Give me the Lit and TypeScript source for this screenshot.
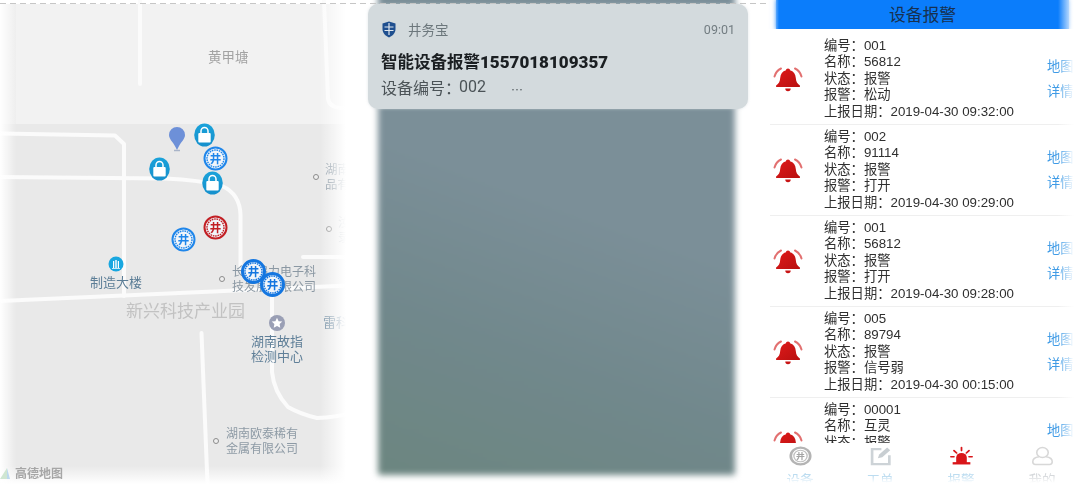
import { LitElement, html, css, svg, unsafeCSS } from "lit";
import { customElement } from "lit/decorators.js";

const FONT = unsafeCSS(`"Liberation Sans", "Noto Sans CJK SC", sans-serif`);

const items = [
  { no: "001", name: "56812", alarm: "松动", date: "2019-04-30 09:32:00" },
  { no: "002", name: "91114", alarm: "打开", date: "2019-04-30 09:29:00" },
  { no: "001", name: "56812", alarm: "打开", date: "2019-04-30 09:28:00" },
  { no: "005", name: "89794", alarm: "信号弱", date: "2019-04-30 00:15:00" },
  { no: "00001", name: "互灵", alarm: "打开", date: "2019-04-30 00:10:00" },
];

const labels = [
  { x: 208, y: 50, s: 13.5, c: "#a3a3a3", t: "黄甲塘" },
  { x: 325, y: 163, s: 12.5, c: "#8d9aa5", t: "湖南<br>品有" },
  { x: 338, y: 216, s: 12.5, c: "#b5bcc2", t: "汝<br>录" },
  { x: 90, y: 274.5, s: 13, c: "#5b7d96", t: "制造大楼" },
  { x: 126, y: 304, s: 17, c: "#c2c2c2", t: "新兴科技产业园" },
  { x: 232, y: 264.5, s: 12, c: "#8b98a3", t: "长沙鸿力电子科<br>技发展有限公司" },
  { x: 251, y: 333.5, s: 13, c: "#5f7f98", t: "湖南故指<br>检测中心" },
  { x: 323, y: 314.5, s: 13, c: "#6f8ba0", t: "雷科" },
  { x: 226, y: 426.5, s: 12, c: "#8d9aa5", t: "湖南欧泰稀有<br>金属有限公司" },
];

const dots = [[316, 177], [329, 229], [222, 279], [216, 441]];
const locks = [[204, 135], [159, 169], [212, 183]];
const wells = [
  { x: 215, y: 158, c: "#1f86ea", heavy: false },
  { x: 215, y: 227, c: "#c21f24", heavy: false },
  { x: 183, y: 239, c: "#1f86ea", heavy: false },
  { x: 253, y: 271, c: "#1476e0", heavy: true },
  { x: 272, y: 284, c: "#1476e0", heavy: true },
];

const bell = html`<svg class="bell" viewBox="0 0 30 26" width="30" height="26">
  <defs><linearGradient id="bg" x1="0" y1="0" x2="1" y2="1"><stop offset="0" stop-color="#e01a1a"/><stop offset="1" stop-color="#b81010"/></linearGradient></defs>
  <path d="M15 2.500c1.200 0 2 .8 2 1.800 3.600 1 5.500 3.800 5.800 7.600.3 3.600 1.400 5.600 4.100 7.600v1.500H3.100v-1.500c2.700-2 3.800-4 4.100-7.600.3-3.800 2.200-6.600 5.800-7.600 0-1 .8-1.800 2-1.800z" fill="url(#bg)"/>
  <path d="M12.300 22.500h5.400a2.700 2.700 0 0 1-5.400 0z" fill="#c81414"/>
  <path d="M8 2.500C4.500 4.200 2.400 7 1.500 10.500M22 2.500c3.500 1.700 5.600 4.500 6.500 8" fill="none" stroke="#e27070" stroke-width="2" stroke-linecap="round"/>
</svg>`;

@customElement("app-root")
export class AppRoot extends LitElement {
  static styles = css`
    :host { display: block; width: 1084px; height: 484px; position: relative; overflow: hidden; background: #fff; font-family: ${FONT}; }
    .dash { position: absolute; left: 0; right: 0; top: 3px; height: 1px; z-index: 2; background: repeating-linear-gradient(90deg, #c6c6c6 0 6px, rgba(255,255,255,0) 6px 10px); }
    .row { display: flex; height: 484px; }

    .map { position: relative; width: 360px; height: 484px; flex: none; overflow: hidden; }
    .map-inner { position: absolute; inset: 4px 0 0 0; background: #e9e9e9; filter: blur(.45px); }
    .map-svg { position: absolute; left: 0; top: -4px; }
    .lbl { position: absolute; line-height: 15px; white-space: nowrap; filter: blur(.3px); }
    .dot { position: absolute; width: 6px; height: 6px; margin: -3px; border-radius: 50%; border: 1.500px solid #8c8c8c; box-sizing: border-box; background: #efefef; }
    .pin { position: absolute; filter: blur(.3px); }
    .map-fade { position: absolute; inset: 0; pointer-events: none;
      background:
        linear-gradient(90deg, #fff 0, rgba(255,255,255,0) 16px),
        linear-gradient(270deg, #fff 14px, rgba(255,255,255,0) 40px),
        linear-gradient(0deg, #fff 0, rgba(255,255,255,0) 18px);
    }
    .amap { position: absolute; left: 15px; top: 467px; font-size: 12px; line-height: 15px; color: #a6a6a6; font-weight: 700; filter: blur(.4px); }
    .amap-logo { position: absolute; left: 0; top: 467px; filter: blur(.5px); }

    .phone { flex: none; width: 410px; position: relative; height: 484px; }
    .wall { position: absolute; left: 18px; top: -8px; width: 357px; height: 483px; border-radius: 2px; filter: blur(3px);
      background: linear-gradient(200deg, #7b8f99 0%, #7b8f98 45%, #71888c 72%, #6c8680 100%); }
    .notice { position: absolute; left: 8px; top: 4px; width: 380px; height: 105px; box-sizing: border-box; border-radius: 10px; background: #d3dadd;
      box-shadow: 0 0 3px rgba(211,218,221,.7); padding: 12px 13px 0; filter: blur(.35px); color: #1b1f22; font-family: "Noto Sans CJK SC", sans-serif; }
    .n-head { display: flex; align-items: center; height: 26px; font-size: 13.500px; color: #6c777c; }
    .n-head svg { margin-left: 1px; }
    .n-app { margin-left: 12px; flex: 1; }
    .n-time { font-family: Roboto, sans-serif; font-size: 12.500px; color: #737d82; }
    .n-title { font-size: 16.500px; font-weight: 700; line-height: 24px; margin-top: 7px; white-space: nowrap; }
    .n-title b { font-family: Roboto, sans-serif; font-size: 17px; }
    .n-sub { display: flex; font-size: 16px; line-height: 26px; color: #4b5357; white-space: nowrap; }
    .n-sub i { font-style: normal; font-size: 12px; margin-left: 25px; padding-top: 3px; }
    .n-sub b { font-family: Roboto, sans-serif; font-weight: 400; font-size: 16px; margin-left: -2px; }

    .app { flex: none; width: 314px; height: 484px; display: flex; flex-direction: column; position: relative; z-index: 3; background: #fff; }
    .hd-wrap { height: 29px; flex: none; padding: 0 15px 0 6px; background: #fff; }
    .hd { height: 27px; padding-bottom: 2px; background: #0b7dfb; display: flex; align-items: center; justify-content: center; font-size: 16.800px; color: #17304f; box-shadow: 0 0 5px 1px #0b7dfb; clip-path: inset(0 -8px 0 -8px); font-family: "Noto Sans CJK SC", sans-serif; }
    .list { flex: 1; min-height: 0; overflow: hidden; padding-top: 5px; }
    .item { height: 91px; box-sizing: border-box; border-bottom: 1px solid #efefef; display: flex; align-items: center; color: #2f2f2f; font-size: 13.300px; }
    .bcell { width: 54px; flex: none; padding-left: 3px; box-sizing: border-box; display: flex; }
    .info { flex: 1; line-height: 16.500px; white-space: nowrap; filter: blur(.35px); }
    .links { width: 37px; flex: none; display: flex; flex-direction: column; gap: 7px; color: #3f9be6; line-height: 18px; white-space: nowrap; overflow: hidden; filter: blur(.3px); }
    .edge { position: absolute; right: 0; top: 0; bottom: 0; width: 26px; background: linear-gradient(90deg, rgba(255,255,255,0), #fff 16px); pointer-events: none; }
    .hd-edge { position: absolute; left: 0; top: 0; width: 9px; height: 29px; background: linear-gradient(90deg, #fff, rgba(255,255,255,0)); }
    .tabs { height: 41px; flex: none; background: #fff; position: relative; }
    .tab { position: absolute; top: 0; width: 60px; margin-left: -30px; display: flex; flex-direction: column; align-items: center; font-size: 13.500px; line-height: 17px; color: #bcdcf0; filter: blur(.5px); }
    .tab svg { display: block; margin-top: 3px; margin-bottom: 6px; }
    .tab.gray { color: #d6d9dc; }
    .t-fade { position: absolute; left: 0; right: 0; bottom: 0; height: 8px; background: linear-gradient(180deg, rgba(255,255,255,0), #fff 85%); pointer-events: none; }
  `;

  well(c: string, heavy: boolean) {
    return html`<svg width="25" height="25" viewBox="0 0 25 25">
      <circle cx="12.500" cy="12.500" r="11" fill="#f1f5fa" stroke="${c}" stroke-width="${heavy ? 3 : 2}"/>
      <circle cx="12.500" cy="12.500" r="8.500" fill="none" stroke="${c}" stroke-width="1.400" stroke-dasharray="1.600 .8"/>
      <text x="12.500" y="16.700" text-anchor="middle" font-size="11.500" font-weight="700" fill="${c}" font-family="Noto Sans CJK SC">井</text>
    </svg>`;
  }

  lock() {
    return html`<svg width="21" height="24" viewBox="0 0 21 24">
      <defs><linearGradient id="lk" x1="0" y1="0" x2="0" y2="1"><stop offset="0" stop-color="#1aa2da"/><stop offset="1" stop-color="#1690cc"/></linearGradient></defs>
      <ellipse cx="10.500" cy="12" rx="10.300" ry="11.500" fill="url(#lk)"/>
      <path d="M7 10.500V8a3.500 3.500 0 0 1 7 0v2.500" fill="none" stroke="#fff" stroke-width="1.500"/>
      <rect x="4.300" y="10" width="12.400" height="9.500" rx="1" fill="#fff"/>
    </svg>`;
  }

  mapRoads() {
    return svg`
      <rect x="0" y="4" width="360" height="120" fill="#f2f2f2"/>
      <rect x="0" y="4" width="16" height="120" fill="#eeeeee"/>
      <g fill="none" stroke="#fbfbfb" stroke-width="4" stroke-linecap="round" stroke-linejoin="round">
        <path d="M140 0V84"/>
        <path d="M324 0L328 98Q329 107 340 108H360"/>
        <path d="M0 133.500L115 135.500L124 144V296"/>
        <path d="M0 177L165 178.500Q200 180 222 186Q240 194 240.500 215V268"/>
        <path d="M0 301L360 285"/>
        <path d="M272 293V372Q274 392 288 407Q300 414 317 418Q335 418 360 411"/>
        <path d="M201.500 333L207.500 484"/>
        <path d="M303 257H360"/>
      </g>`;
  }

  render() {
    const tabs = [
      { x: 30, t: "设备", cls: "", icon: svg`<circle cx="13" cy="13" r="11" fill="none" stroke="#b4b4b4" stroke-width="3"/><circle cx="13" cy="13" r="7.500" fill="none" stroke="#c0c0c0" stroke-width="1.500"/><text x="13" y="17" text-anchor="middle" font-size="10" font-weight="700" fill="#a5a5a5" font-family="Noto Sans CJK SC">井</text>` },
      { x: 110, t: "工单", cls: "", icon: svg`<path d="M14 4H3.500V23.500H23V12" fill="none" stroke="#cdd3d7" stroke-width="3"/><path d="M10 16l1.500-5 9-9 3.500 3.500-9 9z" fill="#c8ced2"/>` },
      { x: 191, t: "报警", cls: "", icon: svg`<path d="M7 22V15a6 6 0 0 1 12 0v7z" fill="#d9161a"/><rect x="3" y="21" width="20" height="3" fill="#d9161a"/><path d="M13 2v4M4.500 6l3 3M21.500 6l-3 3M1 14h3.500M21.500 14H25" stroke="#d9161a" stroke-width="2" stroke-linecap="round"/>` },
      { x: 272, t: "我的", cls: "gray", icon: svg`<circle cx="13" cy="8.500" r="6.500" fill="none" stroke="#d8d8d8" stroke-width="1.800"/><path d="M9 14Q2 15 2 20.500Q2 24 5 24H21Q24 24 24 20.500Q24 15 17 14" fill="none" stroke="#d8d8d8" stroke-width="1.800"/>` },
    ];
    return html`
      <div class="dash"></div>
      <div class="row">
        <section class="map">
          <div class="map-inner">
            <svg class="map-svg" width="360" height="488" viewBox="0 0 360 488">${this.mapRoads()}</svg>
          </div>
          ${labels.map((l) => html`<div class="lbl" style="left:${l.x}px;top:${l.y}px;font-size:${l.s}px;color:${l.c}" .innerHTML=${l.t}></div>`)}
          ${dots.map(([x, y]) => html`<div class="dot" style="left:${x}px;top:${y}px"></div>`)}
          <svg class="pin" style="left:108px;top:256px" width="16" height="16" viewBox="0 0 16 16"><circle cx="8" cy="8" r="7.500" fill="#19a7e0"/><path d="M5 12V5h1.200v7zM7.300 12V4h1.400v8zM9.800 12V5H11v7zM4 12h8v.8H4z" fill="#fff"/></svg>
          <svg class="pin" style="left:268px;top:314px" width="18" height="18" viewBox="0 0 18 18"><circle cx="9" cy="9" r="8" fill="#9a9fb5"/><path d="M9 3.800l1.600 3.400 3.700.4-2.700 2.500.7 3.600L9 12l-3.300 1.700.7-3.600-2.700-2.500 3.700-.4z" fill="#fff"/></svg>
          <svg class="pin" style="left:168px;top:126px" width="18" height="26" viewBox="0 0 18 26"><path d="M9 1a8 8 0 0 1 8 8c0 4-4 7-6.500 12L9 24l-1.500-3C5 16 1 13 1 9a8 8 0 0 1 8-8z" fill="#6d90d8"/><path d="M6 24.500h6" stroke="#a9b4c8" stroke-width="1.500"/></svg>
          ${locks.map(([x, y]) => html`<div class="pin" style="left:${x - 10.5}px;top:${y - 12}px">${this.lock()}</div>`)}
          ${wells.map((w) => html`<div class="pin" style="left:${w.x - 12.5}px;top:${w.y - 12.5}px">${this.well(w.c, w.heavy)}</div>`)}
          <div class="map-fade"></div>
          <svg class="amap-logo" width="12" height="16" viewBox="0 0 12 16"><path d="M0 12L7 1v11z" fill="#cfe6d2"/><path d="M7 1l3 11H7z" fill="#bcd8ee"/></svg>
          <div class="amap">高德地图</div>
        </section>

        <section class="phone">
          <div class="wall"></div>
          <div class="notice">
            <div class="n-head">
              <svg width="14" height="17" viewBox="0 0 14 17"><path d="M7 .5L13.500 2.500V8c0 4-3 7-6.500 8.500C3.500 15 .5 12 .5 8V2.500z" fill="#1f4f8f"/><path d="M7 2v12M2.500 6h9M2.500 9.500h9" stroke="#dfe7ee" stroke-width="1.200"/></svg>
              <span class="n-app">井务宝</span>
              <span class="n-time">09:01</span>
            </div>
            <div class="n-title">智能设备报警<b>1557018109357</b></div>
            <div class="n-sub">设备编号：<b>002</b><i>…</i></div>
          </div>
        </section>

        <section class="app">
          <div class="hd-wrap"><div class="hd">设备报警</div></div>
          <div class="list">
            ${items.map((it) => html`
              <div class="item">
                <div class="bcell">${bell}</div>
                <div class="info">
                  <div>编号：${it.no}</div>
                  <div>名称：${it.name}</div>
                  <div>状态：报警</div>
                  <div>报警：${it.alarm}</div>
                  <div>上报日期：${it.date}</div>
                </div>
                <div class="links"><span>地图</span><span>详情</span></div>
              </div>`)}
          </div>
          <div class="tabs">
            ${tabs.map((t) => html`<div class="tab ${t.cls}" style="left:${t.x}px"><svg width="23" height="20" viewBox="0 0 26 26" preserveAspectRatio="none">${t.icon}</svg>${t.t}</div>`)}
            <div class="t-fade"></div>
          </div>
          <div class="edge"></div>
          <div class="hd-edge"></div>
        </section>
      </div>
    `;
  }
}
